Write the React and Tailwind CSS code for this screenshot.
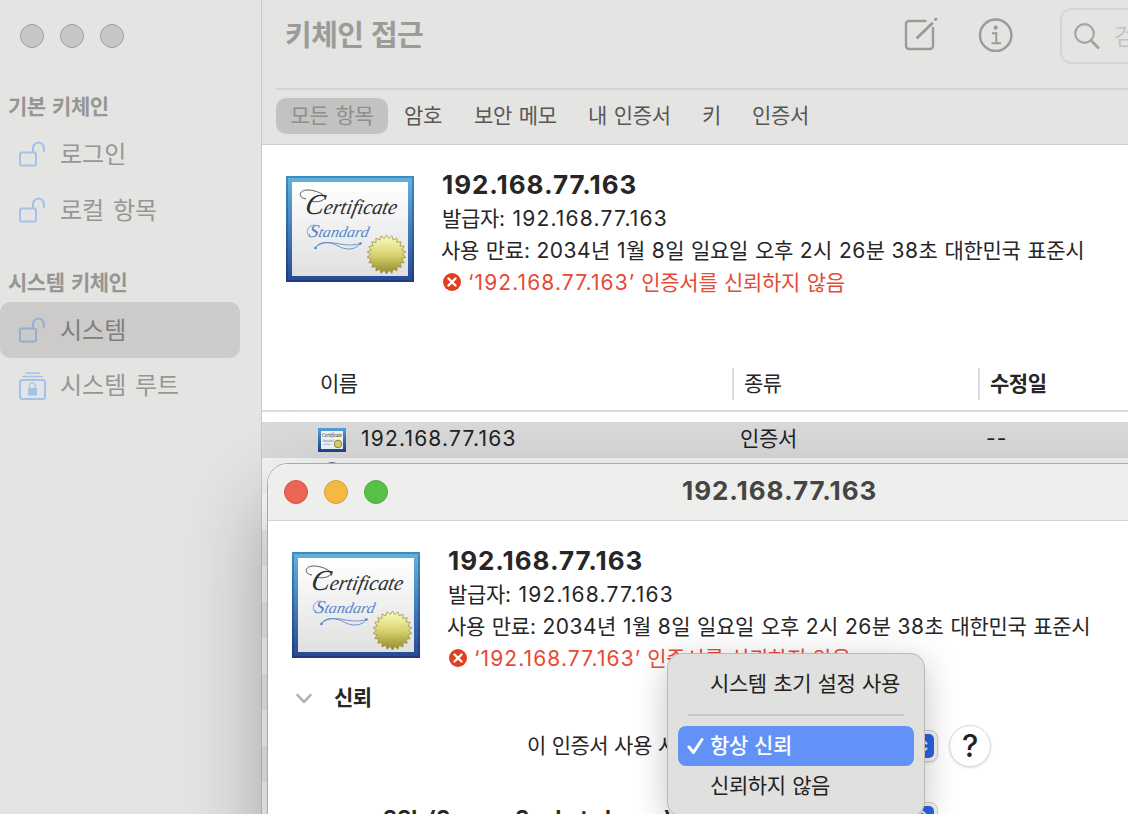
import React from "react";

const sans = "font-['Inter','Noto_Sans_CJK_KR',sans-serif]";

function Unlock({ className = "" }) {
  return (
    <svg className={className} width="28" height="28" viewBox="0 0 28 28" fill="none" stroke="#a3c2ea" strokeWidth="2" strokeLinecap="round">
      <rect x="2" y="12.500" width="16" height="13" rx="2" />
      <path d="M15 12V8a5.400 5.400 0 0 1 10.800 0V11.500" />
    </svg>
  );
}

function Roots() {
  return (
    <svg width="28" height="30" viewBox="0 0 28 30" fill="none" stroke="#a3c2ea" strokeWidth="2" strokeLinecap="round">
      <rect x="2" y="9" width="25" height="19" rx="2.500" />
      <path d="M5 5.500H24M8 2H21.500" strokeWidth="1.700" />
      <rect x="10" y="17" width="9" height="7.500" rx="1" fill="#a3c2ea" stroke="none" />
      <path d="M11.500 17.500V15a3 3 0 0 1 6 0V17.500" strokeWidth="1.200" />
    </svg>
  );
}

function Certificate({ id }) {
  const points = Array.from({ length: 44 }, (_, i) => {
    const r = i % 2 ? 16 : 19.5;
    const a = (i * Math.PI) / 22;
    return `${(100.5 + r * Math.sin(a)).toFixed(2)},${(78.5 - r * Math.cos(a)).toFixed(2)}`;
  }).join(" ");
  return (
    <svg className="block shrink-0" width="128" height="106" viewBox="0 0 128 106">
      <defs>
        <linearGradient id={`${id}f`} x1="0" y1="0" x2="0" y2="1">
          <stop stopColor="#62b2dc" />
          <stop offset="0.500" stopColor="#427fbd" />
          <stop offset="1" stopColor="#284a94" />
        </linearGradient>
        <linearGradient id={`${id}e`} x1="0" y1="0" x2="0" y2="1">
          <stop stopColor="#3f8cbd" />
          <stop offset="1" stopColor="#22397c" />
        </linearGradient>
        <linearGradient id={`${id}p`} x1="0" y1="0" x2="0" y2="1">
          <stop stopColor="#fff" />
          <stop offset="1" stopColor="#e0e0e1" />
        </linearGradient>
        <linearGradient id={`${id}s`} x1="0" y1="0" x2="0" y2="1">
          <stop stopColor="#fffec4" />
          <stop offset="0.500" stopColor="#d8d371" />
          <stop offset="1" stopColor="#938b25" />
        </linearGradient>
      </defs>
      <rect width="128" height="106" fill={`url(#${id}e)`} />
      <rect x="2" y="2" width="124" height="102" fill={`url(#${id}f)`} />
      <rect x="6" y="6" width="116" height="94" fill={`url(#${id}p)`} />
      <path d="M20 23C12 22 12 14 22 14C29 14 38 18 39 21C39 25 30 27 25 25" fill="none" stroke="#333" strokeWidth="0.800" />
      <text transform="translate(18 37.500) skewX(-12)" fontStyle="italic" fontFamily="Liberation Serif, serif" fill="#2d2d2d" textLength="92" lengthAdjust="spacingAndGlyphs"><tspan fontSize="29">C</tspan><tspan fontSize="21">ertificate</tspan></text>
      <path d="M24 60C19 58 21 49 29 49" fill="none" stroke="#5285c9" strokeWidth="0.700" />
      <text transform="translate(22 61) skewX(-12)" fontStyle="italic" fontFamily="Liberation Serif, serif" fill="#5285c9" textLength="60" lengthAdjust="spacingAndGlyphs"><tspan fontSize="18">S</tspan><tspan fontSize="15">tandard</tspan></text>
      <path d="M29 72C34 64 45 66 52 70S69 75 75 67C69 70 60 69 54 68S36 64 29 72Z" fill="none" stroke="#5b8bcb" strokeWidth="0.900" />
      <circle cx="29.500" cy="72" r="1.300" fill="#5285c9" />
      <circle cx="74.500" cy="67.500" r="1.300" fill="#5285c9" />
      <polygon points={points} fill={`url(#${id}s)`} stroke="#8d8633" strokeWidth="0.700" strokeLinejoin="round" />
    </svg>
  );
}

function SmallCertificate() {
  return (
    <svg className="block" width="28" height="24" viewBox="0 0 28 24">
      <defs>
        <linearGradient id="mini" x1="0" y1="0" x2="0" y2="1">
          <stop stopColor="#4fa5d8" />
          <stop offset="1" stopColor="#1e3f91" />
        </linearGradient>
      </defs>
      <rect width="28" height="24" fill="url(#mini)" />
      <rect x="3" y="3" width="22" height="18" fill="#f4f5f7" />
      <text x="4" y="9" fontSize="6" fontStyle="italic" fontFamily="Liberation Serif, serif" fill="#111" textLength="20" lengthAdjust="spacingAndGlyphs">Certificate</text>
      <text x="4.500" y="14" fontSize="4.500" fontStyle="italic" fontFamily="Liberation Serif, serif" fill="#3d77c5" textLength="11" lengthAdjust="spacingAndGlyphs">Standard</text>
      <path d="M5.500 16.500q3-1 7 0" fill="none" stroke="#6f9bd6" strokeWidth="0.700" />
      <circle cx="20" cy="16" r="3.800" fill="#d8d36b" stroke="#77702a" strokeWidth="0.800" />
    </svg>
  );
}

function Num({ children }) {
  return <span className="tracking-[0.500px]">{children}</span>;
}

function CertInfo({ id }) {
  return (
    <div className="flex">
      <Certificate id={id} />
      <div className="ml-7 -mt-2 whitespace-nowrap text-[#262626]">
        <div className="h-[35px] text-[26px] leading-[34px] font-bold tracking-[0.950px]">192.168.77.163</div>
        <div className="h-8 text-[21px] leading-8"><span className="tracking-[-0.300px] [word-spacing:2px]">발급자: </span><span className="tracking-[1.200px]">192.168.77.163</span></div>
        <div className="-ml-px h-8 text-[21px] leading-8 tracking-[-0.300px] [word-spacing:1.200px]">
          사용 만료: <Num>2034</Num>년 <Num>1</Num>월 <Num>8</Num>일 일요일 오후 <Num>2</Num>시 <Num>26</Num>분 <Num>38</Num>초 대한민국 표준시
        </div>
        <div className="flex h-8 items-center text-[21px] leading-8 text-[#e64a35]">
          <svg className="mr-[7px] mb-0.5 ml-px" width="18" height="18" viewBox="0 0 18 18">
            <circle cx="9" cy="9" r="9" fill="#df4020" />
            <path d="M5.500 5.500l7 7m0-7l-7 7" stroke="#fff" strokeWidth="2.400" strokeLinecap="round" />
          </svg>
          <span className="tracking-[1.100px]">‘192.168.77.163’</span><span className="ml-[6px] tracking-[-0.300px] [word-spacing:1px]">인증서를 신뢰하지 않음</span>
        </div>
      </div>
    </div>
  );
}

function Sidebar() {
  return (
    <aside className="flex w-[262px] shrink-0 flex-col border-r border-[#c9c9c8] bg-[#e4e4e2] text-[#969694] [word-spacing:2px]">
      <div className="flex gap-4 pt-6 pl-5">
        <i className="size-6 rounded-full border border-[#a0a09e] bg-[#c6c6c4]" />
        <i className="size-6 rounded-full border border-[#a0a09e] bg-[#c6c6c4]" />
        <i className="size-6 rounded-full border border-[#a0a09e] bg-[#c6c6c4]" />
      </div>
      <div className="mt-11 h-[34px] pl-2 text-[21px] leading-[30px] font-bold tracking-[-0.500px]">기본 키체인</div>
      <div className="flex h-14 items-center pl-[18px] text-[24px]"><Unlock className="mr-[14px]" /><span className="pt-0.5">로그인</span></div>
      <div className="flex h-14 items-center pl-[18px] text-[24px]"><Unlock className="mr-[14px]" /><span className="pt-0.5">로컬 항목</span></div>
      <div className="mt-[30px] h-[34px] pl-2 text-[21px] leading-[30px] font-bold tracking-[-0.500px]">시스템 키체인</div>
      <div className="flex h-14 w-60 items-center rounded-[10px] bg-[#cdcbc9] pl-[18px] text-[24px] text-[#7f7e7d]"><Unlock className="mr-[14px] brightness-90" /><span className="pt-0.5">시스템</span></div>
      <div className="flex h-14 items-center gap-[14px] pl-[18px] text-[24px]"><Roots /><span>시스템 루트</span></div>
    </aside>
  );
}

function Toolbar() {
  return (
    <header className="h-[145px] shrink-0 border-b border-[#cfcfce] bg-[#e4e4e2]">
      <div className="ml-[14px] flex h-[90px] border-b-2 border-[#d3d3d1]">
        <h1 className="mt-4 ml-[9px] w-[619px] shrink-0 text-[29px] leading-10 font-bold tracking-[-0.500px] text-[#9b9b99] [word-spacing:1px]">키체인 접근</h1>
        <svg className="mt-4 shrink-0" width="36" height="36" viewBox="0 0 36 36" fill="none" stroke="#9b9b99" strokeWidth="2.400" strokeLinecap="round">
          <path d="M22 6H5.500a3 3 0 0 0-3 3v22a3 3 0 0 0 3 3h21a3 3 0 0 0 3-3V13" transform="translate(-.5 -1)" />
          <path d="M13.500 21.500L28 7.500M31.500 3.400l.4-.4" strokeWidth="3" />
        </svg>
        <svg className="mt-[18px] ml-[38px] shrink-0" width="36" height="36" viewBox="0 0 36 36" fill="none" stroke="#9b9b99" strokeWidth="2.400">
          <circle cx="17.700" cy="17.200" r="15.700" />
          <circle cx="17.700" cy="9.700" r="2.100" fill="#9b9b99" stroke="none" />
          <path d="M14 15.200h4.300v10M13.500 25.200h9.500" strokeWidth="2" />
        </svg>
        <div className="mt-2 ml-[46px] flex h-14 w-[200px] shrink-0 items-center rounded-xl border-2 border-[#d4d4d2] pl-3 text-[23px] text-[#c2c2c0]">
          <svg className="mr-[14px] shrink-0" width="26" height="27" viewBox="0 0 26 27" fill="none" stroke="#a3a3a1" strokeLinecap="round">
            <circle cx="10.500" cy="10.500" r="9.300" strokeWidth="2.200" />
            <path d="M17.500 18l6.500 6.500" strokeWidth="3" />
          </svg>
          <span className="pt-0.5">검색</span>
        </div>
      </div>
      <nav className="flex h-[52px] items-center pl-[14px] text-[21px] tracking-[-0.300px] text-[#575756] [word-spacing:1.200px]">
        <span className="mr-4 flex h-9 w-28 items-center justify-center rounded-[10px] bg-[#c2c2c0] text-[#8e8e8c]">모든 항목</span>
        <span className="w-[70px]">암호</span>
        <span className="w-[114px]">보안 메모</span>
        <span className="w-[114px]">내 인증서</span>
        <span className="w-[50px]">키</span>
        <span>인증서</span>
      </nav>
    </header>
  );
}

function TrustWindow() {
  return (
    <section className="absolute top-[464px] left-[268px] h-[700px] w-[1000px] overflow-hidden rounded-[20px] bg-white">
      <div className="flex h-[57px] items-center border-b border-[#d2d2d1] bg-[#eeeeec] pl-4">
        <div className="flex gap-4">
          <i className="size-6 rounded-full border border-[#cf5347] bg-[#eb6456]" />
          <i className="size-6 rounded-full border border-[#d99f39] bg-[#f4b942]" />
          <i className="size-6 rounded-full border border-[#4daa3c] bg-[#59c047]" />
        </div>
        <h2 className="mb-0.5 ml-[294px] text-[26px] leading-8 font-bold tracking-[0.950px] text-[#454545]">192.168.77.163</h2>
      </div>
      <div className="flex h-[160px] pt-[31px] pl-6"><CertInfo id="b" /></div>
      <div className="flex h-[34px] items-center pl-[28px] text-[21px] font-bold text-[#262626]">
        <svg className="mr-[22px]" width="16" height="11" viewBox="0 0 16 11" fill="none" stroke="#b5b5b5" strokeWidth="2.600" strokeLinecap="round" strokeLinejoin="round"><path d="M1.500 2L8 9l6.500-7" /></svg>
        <span className="tracking-[-0.500px]">신뢰</span>
      </div>
      <div className="mt-[10px] flex h-[42px] items-center pl-[259px] text-[21px] tracking-[-0.500px] whitespace-nowrap text-[#262626]">
        <span className="w-[261px] [word-spacing:0.500px]">이 인증서 사용 시:</span>
        <div className="flex h-8 w-[150px] items-center justify-end rounded-lg border border-[#cfcfcf] bg-[#f3f3f3] pr-[3px] shadow-sm">
          <Stepper />
        </div>
        <div className="ml-[11px] flex size-[42px] items-center justify-center rounded-full border border-[#dadada] bg-white text-[31px] font-medium text-[#222] shadow">?</div>
      </div>
      <div className="mt-[34px] flex h-9 items-start pl-[115px] text-[21px] font-bold whitespace-nowrap text-[#262626]">
        <span className="w-[405px] pt-[2px] leading-[32px] tracking-[0.400px] [word-spacing:-1px]">SSL (Secure Sockets Layer)</span>
        <div className="mt-px flex h-8 w-[150px] items-center justify-end rounded-lg border border-[#cfcfcf] bg-[#f3f3f3] pr-[3px]">
          <Stepper />
        </div>
      </div>
    </section>
  );
}

function Stepper() {
  return (
    <svg width="24" height="24" viewBox="0 0 24 24" fill="none">
      <rect width="24" height="24" rx="5" fill="#2963e3" />
      <path d="M7.500 9.500L12 5l4.500 4.500M7.500 14.500L12 19l4.500-4.500" stroke="#dfe8fb" strokeWidth="2.200" strokeLinecap="round" strokeLinejoin="round" />
    </svg>
  );
}

function TrustMenu() {
  return (
    <div className="absolute top-[654px] left-[668px] flex h-[162px] w-[256px] flex-col rounded-[14px] bg-[#e0e0de] px-[10px] pt-[10px] text-[21px] tracking-[-0.400px] whitespace-nowrap text-[#222] shadow-[0_0_0_1px_#b9b9b8,0_8px_34px_rgba(0,0,0,0.25)] [word-spacing:1px]">
      <div className="flex h-10 shrink-0 items-center pl-8">시스템 초기 설정 사용</div>
      <div className="mx-[10px] mt-[10px] mb-[10px] h-0.5 shrink-0 bg-[#c6c6c4]" />
      <div className="flex h-10 shrink-0 items-center rounded-lg bg-[#6292f8] pl-[9px] font-medium text-white">
        <svg className="mr-[6px]" width="17" height="18" viewBox="0 0 17 18" fill="none" stroke="#fff" strokeWidth="3" strokeLinecap="round" strokeLinejoin="round"><path d="M2 10l4.500 5.500L15 2.500" /></svg>
        항상 신뢰
      </div>
      <div className="flex h-10 shrink-0 items-center pl-8">신뢰하지 않음</div>
    </div>
  );
}

export default function App() {
  return (
    <div className={`${sans} relative flex h-[814px] w-[1128px] overflow-hidden bg-white`}>
      <Sidebar />
      <main className="flex w-[866px] flex-col overflow-hidden">
        <Toolbar />
        <div className="h-[223px] shrink-0 pt-[31px] pl-6"><CertInfo id="a" /></div>
        <div className="flex h-11 shrink-0 items-start border-b-2 border-[#dcdcdc] text-[21px] leading-8 tracking-[-0.500px] text-[#262626]">
          <span className="w-[470px] pl-[58px]">이름</span>
          <span className="h-8 w-[246px] border-l-2 border-[#dcdcdc] pl-[10px]">종류</span>
          <span className="h-8 border-l-2 border-[#dcdcdc] pl-[10px] font-bold">수정일</span>
        </div>
        <div className="mt-[10px] flex h-9 shrink-0 items-center bg-[#dadada] text-[21px] text-[#222]">
          <div className="flex w-[477px] items-center pl-14"><SmallCertificate /><span className="mb-0.5 ml-[15px] tracking-[1.200px]">192.168.77.163</span></div>
          <span className="mb-0.5 w-[247px] pl-px tracking-[-0.300px]">인증서</span>
          <span className="mb-0.5 tracking-[1px]">--</span>
        </div>
        <div className="h-9 shrink-0 bg-[#f4f5f5] pt-1 pl-[62px]">
          <div className="size-4 rounded-full border-2 border-[#777]" />
        </div>
        <div className="flex-1 bg-[repeating-linear-gradient(#ffffff_0_36px,#f2f2f2_36px_72px)]" />
      </main>
      <div className="absolute top-[464px] left-[268px] h-[700px] w-[1000px] rounded-[20px] shadow-[0_0_0_1px_#a9a9a9,0_36px_86px_rgba(0,0,0,0.32)]" />
      <TrustWindow />
      <TrustMenu />
    </div>
  );
}
